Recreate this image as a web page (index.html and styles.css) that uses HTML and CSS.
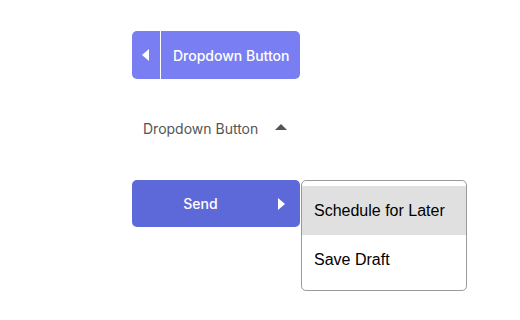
FILE: index.html
```html
<!DOCTYPE html>
<html>
<head>
	<meta charset="utf-8">
	<title>Dropdown Buttons</title>
	<link rel="stylesheet" href="styles.css">
</head>
<body>
	<div class="demo">
		<button class="btn btn-split">
			<span class="btn-side"><span class="caret caret-left"></span></span>
			<span class="btn-label">Dropdown Button</span>
		</button>

		<button class="btn btn-plain">
			<span class="btn-label">Dropdown Button</span>
			<span class="caret caret-up"></span>
		</button>

		<div class="send-group">
			<button class="btn btn-send">
				<span class="btn-label">Send</span>
				<span class="caret caret-right"></span>
			</button>
			<ul class="menu">
				<li class="menu-item active">Schedule for Later</li>
				<li class="menu-item">Save Draft</li>
			</ul>
		</div>
	</div>
</body>
</html>
```

FILE: styles.css
```css
body{
	margin: 0;
	background: white;
}
.demo{
	display: flex;
	flex-direction: column;
	align-items: flex-start;
	box-sizing: border-box;
	min-height: 320px;
	padding: 31px 0 0 132px;
}
.btn{
	display: flex;
	align-items: center;
	height: 48px;
	margin: 0;
	padding: 0;
	border: none;
	border-radius: 5px;
	background: none;
	font-family: Inter, "Liberation Sans", sans-serif;
	font-size: 14px;
	font-weight: 500;
	cursor: pointer;
}
.btn-split{
	width: 168px;
	background: #797ff2;
	color: white;
}
.btn-side{
	display: flex;
	align-items: center;
	height: 100%;
	padding: 0 11px 0 10px;
	border-right: 1px solid white;
}
.btn-split .btn-label{
	padding-left: 12px;
}
.btn-plain{
	margin-top: 25px;
	padding-left: 11px;
	color: #555;
	font-weight: 400;
}
.btn-plain .caret{
	margin-left: 17px;
}
.send-group{
	position: relative;
	margin-top: 28px;
}
.btn-send{
	width: 168px;
	height: 47px;
	background: #5e69d9;
	color: white;
}
.btn-send .btn-label{
	flex: 1;
	text-align: center;
	padding-right: 9px;
}
.btn-send .caret{
	margin-right: 15px;
}
.caret{
	display: inline-block;
	width: 0;
	height: 0;
}
.caret-left{
	border-top: 6px solid transparent;
	border-bottom: 6px solid transparent;
	border-right: 7px solid white;
}
.caret-right{
	border-top: 6px solid transparent;
	border-bottom: 6px solid transparent;
	border-left: 7px solid white;
}
.caret-up{
	border-left: 6px solid transparent;
	border-right: 6px solid transparent;
	border-bottom: 6px solid #555;
	margin-bottom: 2px;
}
.menu{
	position: absolute;
	top: 0;
	left: calc(100% + 1px);
	width: 164px;
	margin: 0;
	padding: 5px 0 6px;
	list-style: none;
	background: white;
	border: 1px solid #999;
	border-radius: 5px;
}
.menu-item{
	height: 49px;
	line-height: 49px;
	padding-left: 12px;
	font-family: "Liberation Sans", Arial, sans-serif;
	font-size: 16px;
	color: black;
}
.menu-item.active{
	background: #e0e0e0;
}
```
